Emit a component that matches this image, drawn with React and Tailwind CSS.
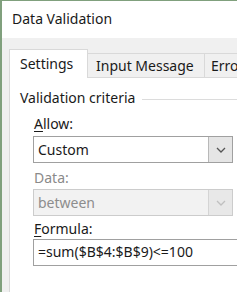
import React from 'react';

const Chevron = ({ color }) => (
  <svg width="10" height="6" viewBox="0 0 10 6" fill="none">
    <path d="M1 1 L5 5 L9 1" stroke={color} strokeWidth="1.3" />
  </svg>
);

const App = () => {
  return (
    <div
      className="w-[237px] h-[292px] overflow-hidden flex flex-col border-l-2 border-t border-[#80a07d] bg-[#f0f0f0] text-[#1a1a1a]"
      style={{ fontFamily: '"Noto Sans", "Open Sans", sans-serif' }}
    >
      <div className="h-[37px] shrink-0 bg-white pl-[10px] pt-[9px] text-[14px] leading-[18px]">
        Data Validation
      </div>
      <div className="flex-1 flex flex-col pl-[7px] pt-[11px]">
        <div className="flex items-end h-[29px] shrink-0 text-[14px] leading-[18px] whitespace-nowrap overflow-hidden">
          <div className="w-[79px] shrink-0 h-[29px] bg-white border border-b-0 border-[#d9d9d9] pl-[10px] pt-[5px] relative z-10">
            Settings
          </div>
          <div className="w-[117px] shrink-0 h-[25px] border-t border-r border-[#d9d9d9] pl-[8px] pt-[3px]">
            Input Message
          </div>
          <div className="w-[80px] shrink-0 h-[25px] border-t border-[#d9d9d9] pl-[6px] pt-[3px]">
            Error Alert
          </div>
        </div>
        <div className="flex-1 bg-white border-l border-t border-[#d9d9d9] -mt-px pl-[10px] pt-[11px] text-[14px] leading-[18px]">
          <div className="flex items-center gap-[7px] h-[18px]">
            <span className="whitespace-nowrap">Validation criteria</span>
            <div className="flex-1 h-px bg-[#dcdcdc] mt-[2px]" />
          </div>
          <div className="pl-[13px] pt-[8px]">
            <div className="h-[18px] pl-px">
              <span className="underline underline-offset-2">A</span>llow:
            </div>
            <div className="mt-[3px] w-[200px] h-[27px] flex border border-[#a0a0a0] bg-white">
              <div className="flex-1 pl-[4px] pt-[4px]">Custom</div>
              <div className="w-[24px] bg-[#e5e5e5] border-l border-[#b8b8b8] flex items-center justify-center">
                <Chevron color="#555555" />
              </div>
            </div>
            <div className="mt-[6px] h-[18px] pl-px text-[#8a8a8a]">Data:</div>
            <div className="mt-[2px] w-[200px] h-[27px] flex border border-[#cccccc] bg-[#f2f2f2] text-[#8d8d8d]">
              <div className="flex-1 pl-[4px] pt-[4px]">between</div>
              <div className="w-[24px] bg-[#e8e8e8] border-l border-[#d4d4d4] flex items-center justify-center">
                <Chevron color="#c0c0c0" />
              </div>
            </div>
            <div className="mt-[4px] h-[18px] pl-px">
              <span className="underline underline-offset-2">F</span>ormula:
            </div>
            <div className="mt-[1px] w-[220px] h-[27px] border border-[#a0a0a0] border-r-0 bg-white pl-[4px] pt-[3px]">
              =sum($B$4:$B$9)&lt;=100
            </div>
          </div>
        </div>
      </div>
    </div>
  );
};

export default App;
